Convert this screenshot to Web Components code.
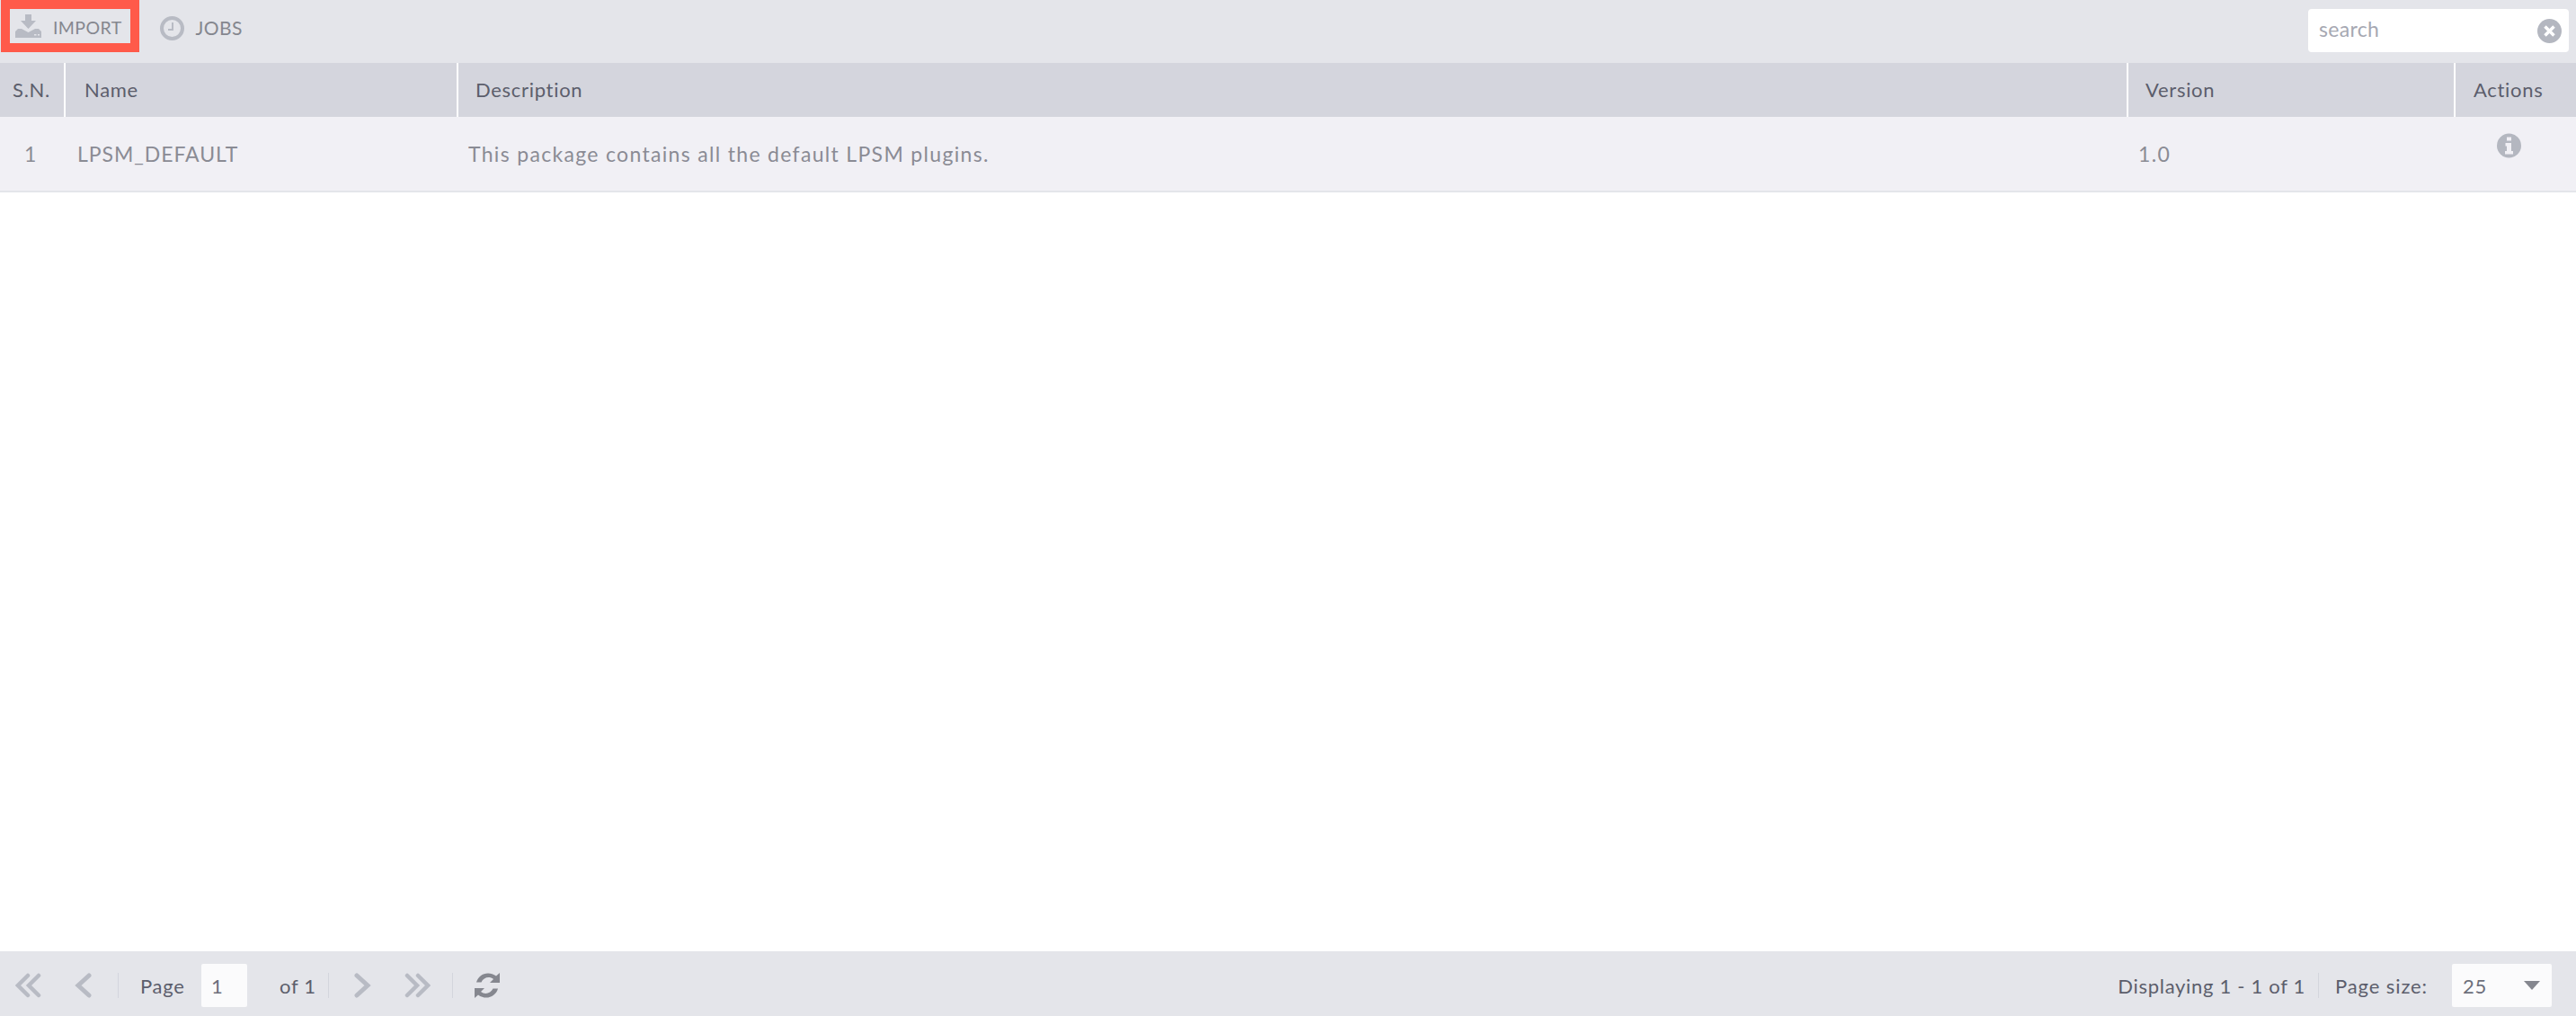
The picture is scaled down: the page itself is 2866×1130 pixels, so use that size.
<!DOCTYPE html>
<html>
<head>
<meta charset="utf-8">
<title>Packages</title>
<style>
    html, body { margin: 0; height: 100%; background: #fff; }
    body { font-family: Lato, "Open Sans", sans-serif; overflow: hidden; }
</style>
</head>
<body>
<package-app>
    <grid-toolbar slot="top">
        <tool-button label="IMPORT" icon="import" highlighted></tool-button>
        <tool-button label="JOBS" icon="clock"></tool-button>
        <search-field slot="end" placeholder="search"></search-field>
    </grid-toolbar>
    <package-grid slot="grid"></package-grid>
    <grid-pager slot="bottom"></grid-pager>
</package-app>

<script>
const ICONS = {
    import: `<svg width="29" height="26" viewBox="0 0 29 26"><path fill="#b8bbc4" d="M11 0h7v7h5l-8.500 9L6 7h5zM0 26V19l3-3h4l7.500 4L22 16h4l3 3v7z"/><path fill="#e4e5ea" d="M21 22h2.500v1.500H21zM25 22h2v1.500h-2z"/></svg>`,
    clock: `<svg style="margin-top:4px" width="27" height="27" viewBox="0 0 27 27"><circle cx="13.500" cy="13.500" r="11.500" fill="none" stroke="#b8bbc4" stroke-width="4"/><path fill="none" stroke="#b8bbc4" stroke-width="2" d="M14 7v8H9"/></svg>`,
    first: `<svg width="29" height="28" viewBox="0 0 29 28"><path fill="none" stroke="#b8bbc4" stroke-width="4.500" stroke-linecap="round" d="M14 3L3 14l11 11M26 3L15 14l11 11"/></svg>`,
    prev: `<svg width="19" height="28" viewBox="0 0 19 28"><path fill="none" stroke="#b8bbc4" stroke-width="5" stroke-linecap="round" d="M16 3L4 14l12 11"/></svg>`,
    next: `<svg width="19" height="28" viewBox="0 0 19 28"><path fill="none" stroke="#b8bbc4" stroke-width="5" stroke-linecap="round" d="M3 3l12 11L3 25"/></svg>`,
    last: `<svg width="29" height="28" viewBox="0 0 29 28"><path fill="none" stroke="#b8bbc4" stroke-width="4.500" stroke-linecap="round" d="M3 3l11 11L3 25M15 3l11 11-11 11"/></svg>`,
    refresh: `<svg width="28" height="28" viewBox="0 0 28 28"><path fill="#85878f" d="M28 0v11H17l4-4c-4.500-3.500-11-2-13.500 3.500H2C4.500 1.500 15-3 24 3.500zM0 28V17h11l-4 4c4.500 3.500 11 2 13.500-3.500H26C23.500 26.500 13 31 4 24.500z"/></svg>`,
    info: `<svg width="27" height="28" viewBox="0 0 27 28"><circle cx="13.500" cy="14" r="13.500" fill="#b4b7c0"/><path fill="#f1f0f5" d="M11 4.500h5v4h-5zM9.500 11h6.500v9h2v3.500H9V20h2v-5.500H9.500z"/></svg>`
};

class PackageApp extends HTMLElement {
    constructor() {
        super();
        this.attachShadow({mode: 'open'}).innerHTML = `
        <style>
            :host { display: flex; flex-direction: column; height: 100vh; }
            .middle { flex: 1; min-height: 0; }
        </style>
        <slot name="top"></slot>
        <div class="middle"><slot name="grid"></slot></div>
        <slot name="bottom"></slot>`;
    }
}
customElements.define('package-app', PackageApp);

class GridToolbar extends HTMLElement {
    constructor() {
        super();
        this.attachShadow({mode: 'open'}).innerHTML = `
        <style>
            :host { display: flex; align-items: flex-start; height: 70px; background: #e4e5ea; padding-left: 1px; box-sizing: border-box; gap: 7px; }
            .end { margin-left: auto; padding: 10px 8px 0 0; }
        </style>
        <slot></slot>
        <div class="end"><slot name="end"></slot></div>`;
    }
}
customElements.define('grid-toolbar', GridToolbar);

class ToolButton extends HTMLElement {
    constructor() {
        super();
        const on = this.hasAttribute('highlighted');
        this.attachShadow({mode: 'open'}).innerHTML = `
        <style>
            :host { display: block; }
            .btn { display: flex; align-items: center; box-sizing: border-box; height: 58px; gap: 13px;
                   border: 10px solid ${on ? '#ff5a4a' : 'transparent'}; padding: 0 9px 0 6px;
                   font-size: ${on ? '19.5px' : '21px'}; letter-spacing: .4px; color: #85878f; }
            span { margin-top: 3px; }
            svg { display: block; flex: none; }
        </style>
        <div class="btn">${ICONS[this.getAttribute('icon')]}<span>${this.getAttribute('label')}</span></div>`;
    }
}
customElements.define('tool-button', ToolButton);

class SearchField extends HTMLElement {
    constructor() {
        super();
        this.attachShadow({mode: 'open'}).innerHTML = `
        <style>
            :host { display: flex; align-items: center; justify-content: space-between; box-sizing: border-box;
                    width: 290px; height: 48px; padding: 0 8px 0 12px; background: #fff; border-radius: 4px;
                    font-size: 23px; letter-spacing: .3px; color: #a6a8b2; }
            span { margin-top: -5px; }
            svg { display: block; }
        </style>
        <span>${this.getAttribute('placeholder')}</span>
        <svg width="27" height="27" viewBox="0 0 27 27"><circle cx="13.500" cy="13.500" r="13.500" fill="#b4b7c0"/><path stroke="#fff" stroke-width="3.500" d="M8.500 8.500l10 10M18.500 8.500l-10 10"/></svg>`;
    }
}
customElements.define('search-field', SearchField);

class PackageGrid extends HTMLElement {
    constructor() {
        super();
        const columns = ['S.N.', 'Name', 'Description', 'Version', 'Actions'];
        this.attachShadow({mode: 'open'}).innerHTML = `
        <style>
            :host { display: block; }
            .row { display: grid; grid-template-columns: 71px 437px 1858px 364px 1fr; }
            .head { height: 60px; background: #d4d5dd; color: #5c5e6c; font-size: 22px; letter-spacing: .7px; }
            .head div { display: flex; align-items: center; padding: 0 0 2px 21px; border-left: 2px solid #fff; }
            .head div:first-child { padding-left: 14px; border-left: 0; }
            .head div:nth-child(3), .head div:nth-child(4) { padding-left: 19px; }
            .head div:last-child { padding-left: 20px; }
            .body { height: 84px; box-sizing: border-box; background: #f1f0f5; color: #8a8b94; font-size: 23px; letter-spacing: 1.320px;
                    border-bottom: 2px solid #e4e5ea; }
            .body div { display: flex; align-items: center; padding: 0 0 1px 15px; }
            .body div:first-child { padding-left: 27px; }
            .body div:nth-child(2) { letter-spacing: .95px; }
            .body div:nth-child(3), .body div:nth-child(4) { padding-left: 13px; }
            svg { display: block; margin: -18px 0 0 33px; }
        </style>
        <div class="row head">${columns.map(c => `<div>${c}</div>`).join('')}</div>
        <div class="row body">
            <div>1</div>
            <div>LPSM_DEFAULT</div>
            <div>This package contains all the default LPSM plugins.</div>
            <div>1.0</div>
            <div>${ICONS.info}</div>
        </div>`;
    }
}
customElements.define('package-grid', PackageGrid);

class GridPager extends HTMLElement {
    constructor() {
        super();
        this.attachShadow({mode: 'open'}).innerHTML = `
        <style>
            :host { display: flex; align-items: center; box-sizing: border-box; height: 72px; padding: 4px 27px 0 17px;
                    background: #e4e5ea; color: #5c5e6c; font-size: 22px; letter-spacing: .7px; white-space: nowrap; }
            svg { display: block; flex: none; }
            .sep { width: 1px; height: 28px; background: #d3d5dd; flex: none; }
            .box { display: flex; align-items: center; box-sizing: border-box; height: 48px; background: #fbfbfc; border-radius: 2px; color: #6d6f7b; }
            .page { width: 51px; padding-left: 11px; }
            .size { width: 111px; padding: 0 13px 0 12px; justify-content: space-between; }
            .push { margin-left: auto; }
        </style>
        ${ICONS.first}
        <span style="width:37px"></span>${ICONS.prev}
        <span style="width:29px"></span><div class="sep"></div>
        <span style="margin-left:24px;width:50px">Page</span>
        <div class="box page" style="margin-left:18px">1</div>
        <span style="margin-left:36px;width:36px">of 1</span>
        <div class="sep" style="margin-left:18px"></div>
        <span style="width:28px"></span>${ICONS.next}
        <span style="width:37px"></span>${ICONS.last}
        <span style="width:24px"></span><div class="sep"></div>
        <span style="width:24px"></span>${ICONS.refresh}
        <span class="push">Displaying 1 - 1 of 1</span>
        <div class="sep" style="margin-left:14px"></div>
        <span style="margin-left:18px;letter-spacing:.9px">Page size:</span>
        <div class="box size" style="margin-left:27px"><span>25</span>
            <svg width="18" height="10" viewBox="0 0 18 10"><path fill="#85878f" d="M0 0h18L9 10z"/></svg></div>`;
    }
}
customElements.define('grid-pager', GridPager);
</script>
</body>
</html>
